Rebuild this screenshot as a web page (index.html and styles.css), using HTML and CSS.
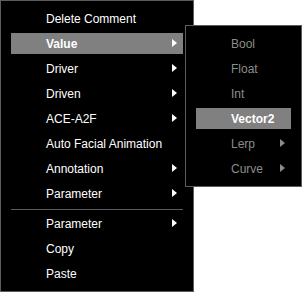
FILE: index.html
```html
<!DOCTYPE html>
<html lang="en">
<head>
  <meta charset="UTF-8">
  <title>Context Menu</title>
  <link rel="stylesheet" href="styles.css">
</head>
<body>
  <div class="menu main-menu">
    <div class="item"><span class="label">Delete Comment</span></div>
    <div class="item active has-sub"><span class="label">Value</span></div>
    <div class="item has-sub"><span class="label">Driver</span></div>
    <div class="item has-sub"><span class="label">Driven</span></div>
    <div class="item has-sub"><span class="label">ACE-A2F</span></div>
    <div class="item"><span class="label">Auto Facial Animation</span></div>
    <div class="item has-sub"><span class="label">Annotation</span></div>
    <div class="item has-sub"><span class="label">Parameter</span></div>
    <div class="separator"></div>
    <div class="item has-sub"><span class="label">Parameter</span></div>
    <div class="item"><span class="label">Copy</span></div>
    <div class="item"><span class="label">Paste</span></div>
  </div>

  <!-- submenu opened from "Value" -->
  <div class="menu sub-menu">
    <div class="item dim"><span class="label">Bool</span></div>
    <div class="item dim"><span class="label">Float</span></div>
    <div class="item dim"><span class="label">Int</span></div>
    <div class="item active"><span class="label">Vector2</span></div>
    <div class="item dim has-sub"><span class="label">Lerp</span></div>
    <div class="item dim has-sub"><span class="label">Curve</span></div>
  </div>
</body>
</html>
```

FILE: styles.css
```css
/* Global */
*, *::before, *::after { box-sizing: border-box; }
body {
  margin: 0;
  background: #fff;
  font-family: "Liberation Sans", Arial, sans-serif;
  font-size: 12px;
}

/* Menus */
.menu {
  background: #000;
  border: 1px solid #5c5c5c;
  padding: 5px 0;
}
.main-menu { width: 194px; }
.sub-menu {
  position: absolute;
  left: 185px;
  top: 25px;
  width: 117px;
}

/* Items */
.item {
  height: 25px;
  padding: 2px 10px;
  display: flex;
}
.label {
  flex: 1;
  display: flex;
  align-items: center;
  padding-left: 35px;
  color: #fff;
  position: relative;
}
.item.active .label {
  background: #808080;
  font-weight: bold;
}
.item.dim .label { color: #8c8c8c; }

/* Submenu arrow */
.has-sub .label::after {
  content: "";
  position: absolute;
  right: 6px;
  top: 6px;
  border-left: 5px solid #fff;
  border-top: 4.5px solid transparent;
  border-bottom: 4.5px solid transparent;
}
.has-sub.dim .label::after { border-left-color: #8c8c8c; }

.separator {
  height: 5px;
  margin: 0 10px;
  padding-top: 3px;
}
.separator::before {
  content: "";
  display: block;
  height: 1px;
  background: #5c5c5c;
}
```
